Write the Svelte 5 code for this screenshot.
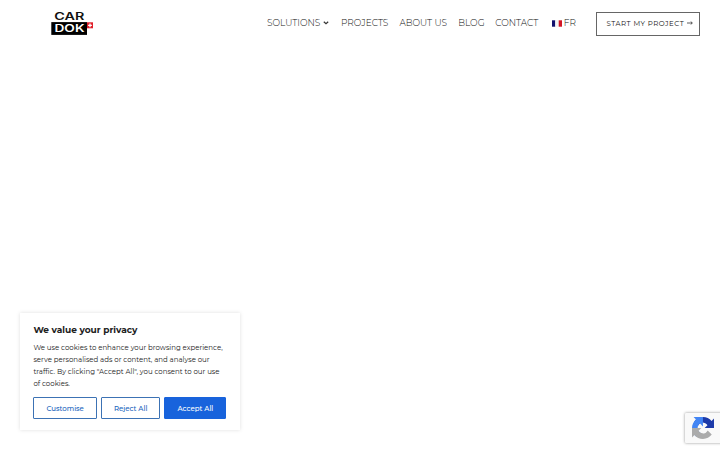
<script lang="ts">
	const navItems = [
		{ name: 'SOLUTIONS', href: '#solutions', slug: 'solutions', dropdown: true },
		{ name: 'PROJECTS', href: '#projects', slug: 'projects' },
		{ name: 'ABOUT US', href: '#about', slug: 'about' },
		{ name: 'BLOG', href: '#blog', slug: 'blog' },
		{ name: 'CONTACT', href: '#contact', slug: 'contact' }
	];

	const privacyLines = [
		'We use cookies to enhance your browsing experience,',
		'serve personalised ads or content, and analyse our',
		'traffic. By clicking "Accept All", you consent to our use',
		'of cookies.'
	];
</script>

<div class="page">
	<header>
		<a class="logo" href="#home" aria-label="Car Dok">
			<svg viewBox="0 0 43 25" width="43" height="25">
				<rect x="0.3" y="11.1" width="35.7" height="12.8" fill="#000" />
				<text x="3.3" y="8.9" textLength="30" lengthAdjust="spacingAndGlyphs" fill="#111">CAR</text>
				<text x="3.5" y="21.2" textLength="30" lengthAdjust="spacingAndGlyphs" fill="#fff">DOK</text>
				<rect x="36" y="11.3" width="6" height="6" fill="#e0202a" />
				<path d="M39 12.4v3.8M37.1 14.3h3.8" stroke="#fff" stroke-width="1.3" />
			</svg>
		</a>

		<nav>
			{#each navItems as item}
				<a class={item.slug} href={item.href}>
					<span>{item.name}</span>
					{#if item.dropdown}
						<svg class="chevron" viewBox="0 0 6 4" width="6" height="4">
							<path d="M0.8 0.8 3 2.8 5.2 0.8" />
						</svg>
					{/if}
				</a>
			{/each}
			<a class="lang" href="#fr">
				<svg viewBox="0 0 10 7" width="10" height="7">
					<rect y="0.3" width="3.3" height="6.4" fill="#11106d" />
					<rect x="3.3" y="0.3" width="3.4" height="6.4" fill="#f2f2f2" />
					<rect x="6.7" y="0.3" width="3.3" height="6.4" fill="#d21626" />
				</svg>
				<span>FR</span>
			</a>
		</nav>

		<a class="start" href="#start">
			<span>START MY PROJECT</span>
			<svg viewBox="0 0 6 4" width="6" height="4">
				<path d="M0 2h5.2M3.7 0.5 5.3 2 3.7 3.5" />
			</svg>
		</a>
	</header>

	<section class="consent">
		<h2>We value your privacy</h2>
		<p>
			{#each privacyLines as line}
				<span>{line}</span>
			{/each}
		</p>
		<div class="buttons">
			<button>Customise</button>
			<button>Reject All</button>
			<button class="accept">Accept All</button>
		</div>
	</section>

	<div class="recaptcha">
		<svg viewBox="0 0 64 64" width="22" height="22">
			<path
				fill="#1c3aa9"
				d="M64 31.955l-.033-1.37V4.687l-7.16 7.16C50.948 4.674 42.033.093 32.05.093c-10.4 0-19.622 4.96-25.458 12.64l11.736 11.86a15.55 15.55 0 0 1 4.754-5.334c2.05-1.6 4.952-2.906 8.968-2.906.485 0 .86.057 1.135.163 4.976.393 9.288 3.14 11.828 7.124l-8.307 8.307L64 31.953"
			/>
			<path
				fill="#4285f4"
				d="M31.862.094l-1.37.033H4.594l7.16 7.16C4.58 13.147 0 22.06 0 32.046c0 10.4 4.96 19.622 12.64 25.458L24.5 45.768a15.55 15.55 0 0 1-5.334-4.754c-1.6-2.05-2.906-4.952-2.906-8.968 0-.485.057-.86.163-1.135.393-4.976 3.14-9.288 7.124-11.828l8.307 8.307L31.86.095"
			/>
			<path
				fill="#ababab"
				d="M.001 32.045l.033 1.37v25.898l7.16-7.16c5.86 7.173 14.774 11.754 24.76 11.754 10.4 0 19.622-4.96 25.458-12.64l-11.736-11.86a15.55 15.55 0 0 1-4.754 5.334c-2.05 1.6-4.952 2.906-8.968 2.906-.485 0-.86-.057-1.135-.163-4.976-.393-9.288-3.14-11.828-7.124l8.307-8.307L0 32.047"
			/>
		</svg>
	</div>
</div>

<style>
	:global(body) {
		margin: 0;
		background: #fff;
	}

	.page {
		position: relative;
		height: 450px;
		overflow: hidden;
		font-family: Montserrat, Inter, sans-serif;
	}

	a {
		color: inherit;
		text-decoration: none;
	}

	header {
		display: flex;
		align-items: flex-start;
		box-sizing: border-box;
		padding: 11px 20px 0 51px;
	}

	.logo svg {
		display: block;
	}

	.logo text {
		font-family: Inter, sans-serif;
		font-size: 9.8px;
		font-weight: 600;
	}

	nav {
		display: flex;
		margin-left: 173px;
		padding-top: 5px;
		color: #111;
		font-size: 9px;
		font-weight: 300;
		line-height: 14px;
		white-space: nowrap;
	}

	nav a {
		display: flex;
		align-items: center;
		flex: none;
	}

	.solutions {
		width: 74px;
	}

	.projects {
		width: 58.4px;
	}

	.about {
		width: 58.8px;
	}

	.blog {
		width: 37px;
	}

	.contact {
		width: 57px;
	}

	.lang {
		gap: 1.6px;
		width: 44px;
	}

	.lang svg {
		margin-top: 1px;
	}

	.chevron {
		margin-left: 3px;
	}

	.chevron path,
	.start path {
		fill: none;
		stroke: #333;
		stroke-width: 1.2;
	}

	.start {
		display: flex;
		align-items: center;
		flex: none;
		gap: 2.5px;
		box-sizing: border-box;
		width: 104px;
		height: 24px;
		margin: 1px 0 0 auto;
		padding: 0 0 2px 9.4px;
		border: 1px solid #666;
		color: #111;
		font-size: 7px;
		letter-spacing: 0.5px;
		white-space: nowrap;
	}

	.start path {
		stroke-width: 0.8;
	}

	.consent {
		position: absolute;
		top: 313px;
		left: 20px;
		box-sizing: border-box;
		width: 220px;
		height: 117px;
		padding: 10px 13px 0 13.4px;
		background: #fff;
		box-shadow: 0 0 4px rgba(0, 0, 0, 0.13);
	}

	h2 {
		margin: 0 0 6px;
		color: #212121;
		font-size: 9px;
		font-weight: 700;
		line-height: 13px;
	}

	p {
		margin: 0;
		color: #212121;
		font-size: 7px;
		line-height: 12px;
		white-space: nowrap;
	}

	p span {
		display: block;
	}

	.buttons {
		display: flex;
		gap: 4px;
		margin-top: 7px;
	}

	button {
		box-sizing: border-box;
		width: 63.5px;
		height: 22px;
		padding: 0;
		border: 1px solid #3c72b4;
		border-radius: 1px;
		background: none;
		color: #1863bc;
		font-family: inherit;
		font-size: 7px;
		font-weight: 500;
		white-space: nowrap;
	}

	button:nth-child(2) {
		width: 59.5px;
	}

	button.accept {
		width: 62px;
		border-color: #1863dc;
		background: #1863dc;
		color: #fff;
	}

	.recaptcha {
		position: absolute;
		top: 413px;
		right: -93px;
		box-sizing: border-box;
		width: 128px;
		height: 30px;
		padding: 4px 0 0 7px;
		border-radius: 1px;
		background: #f9f9f9;
		box-shadow: 0 0 3px #909090;
	}
</style>
